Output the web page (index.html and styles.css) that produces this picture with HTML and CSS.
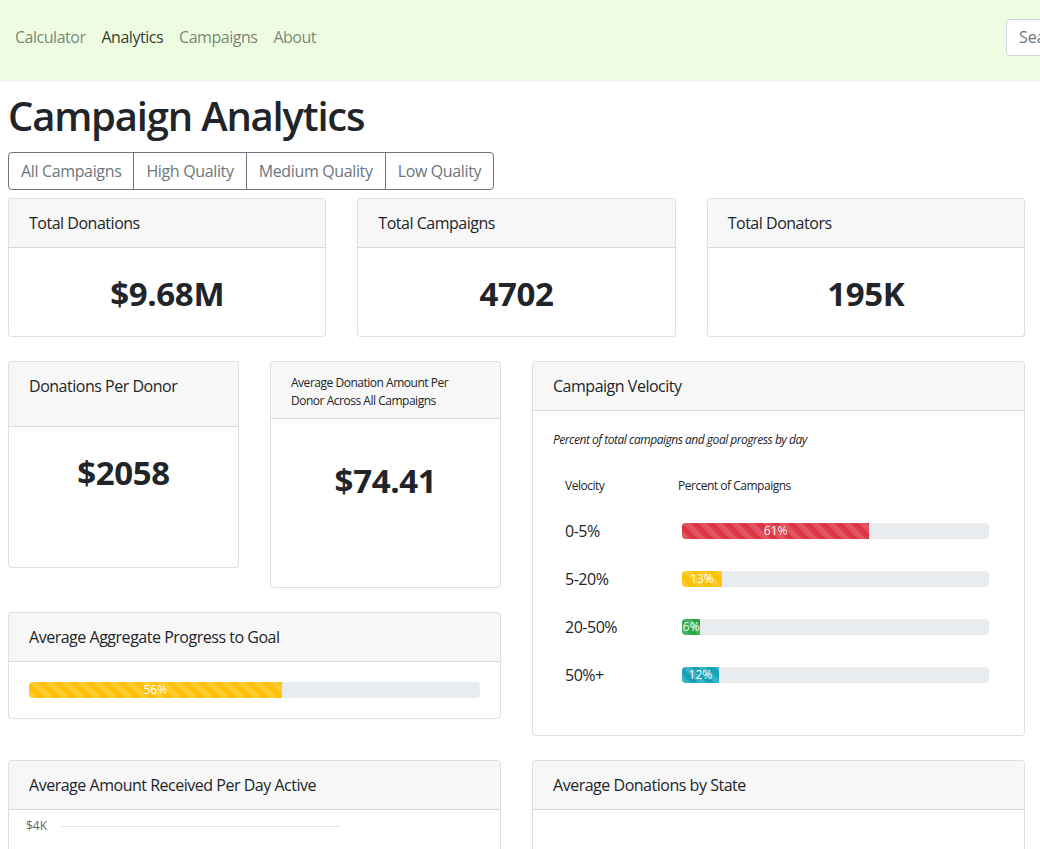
FILE: index.html
```html
<!DOCTYPE html>
<html lang="en">
<head>
<meta charset="utf-8">
<title>Campaign Analytics</title>
<link rel="stylesheet" href="styles.css">
</head>
<body>
<nav class="navbar">
  <ul class="nav-links">
    <li><a class="nav-link" href="#">Calculator</a></li>
    <li><a class="nav-link active" href="#">Analytics</a></li>
    <li><a class="nav-link" href="#">Campaigns</a></li>
    <li><a class="nav-link" href="#">About</a></li>
  </ul>
  <form class="search-form">
    <input class="search-input" type="search" placeholder="Search">
  </form>
</nav>

<main class="page">
  <h1 class="page-title">Campaign Analytics</h1>
  <div class="btn-group">
    <button class="btn">All Campaigns</button>
    <button class="btn">High Quality</button>
    <button class="btn">Medium Quality</button>
    <button class="btn">Low Quality</button>
  </div>

  <section class="row-three">
    <div class="card">
      <div class="card-header">Total Donations</div>
      <div class="card-body stat-body"><div class="stat">$9.68M</div></div>
    </div>
    <div class="card">
      <div class="card-header">Total Campaigns</div>
      <div class="card-body stat-body"><div class="stat">4702</div></div>
    </div>
    <div class="card">
      <div class="card-header">Total Donators</div>
      <div class="card-body stat-body"><div class="stat">195K</div></div>
    </div>
  </section>

  <section class="row-two">
    <div class="col">
      <div class="pair">
        <div class="card">
          <div class="card-header header-tall">Donations Per Donor</div>
          <div class="card-body body-donor"><div class="stat">$2058</div></div>
        </div>
        <div class="card">
          <div class="card-header header-small">Average Donation Amount Per Donor Across All Campaigns</div>
          <div class="card-body body-avg"><div class="stat">$74.41</div></div>
        </div>
      </div>
      <div class="card">
        <div class="card-header">Average Aggregate Progress to Goal</div>
        <div class="card-body">
          <div class="progress"><div class="progress-bar bar-warning" style="width:56%">56%</div></div>
        </div>
      </div>
    </div>

    <div class="col">
      <div class="card">
        <div class="card-header">Campaign Velocity</div>
        <div class="card-body">
          <p class="subtitle">Percent of total campaigns and goal progress by day</p>
          <table class="velocity">
            <thead>
              <tr><th class="col-label">Velocity</th><th>Percent of Campaigns</th></tr>
            </thead>
            <tbody>
              <tr><td class="col-label">0-5%</td><td class="bar-cell"><div class="progress"><div class="progress-bar bar-danger" style="width:61%">61%</div></div></td></tr>
              <tr><td class="col-label">5-20%</td><td class="bar-cell"><div class="progress"><div class="progress-bar bar-warning" style="width:13%">13%</div></div></td></tr>
              <tr><td class="col-label">20-50%</td><td class="bar-cell"><div class="progress"><div class="progress-bar bar-success" style="width:6%">6%</div></div></td></tr>
              <tr><td class="col-label">50%+</td><td class="bar-cell"><div class="progress"><div class="progress-bar bar-info" style="width:12%">12%</div></div></td></tr>
            </tbody>
          </table>
        </div>
      </div>
    </div>
  </section>

  <section class="row-two">
    <div class="card">
      <div class="card-header">Average Amount Received Per Day Active</div>
      <div class="card-body chart-body">
        <div class="axis-row"><span class="axis-label">$4K</span><span class="grid-line"></span></div>
      </div>
    </div>
    <div class="card">
      <div class="card-header">Average Donations by State</div>
      <div class="card-body chart-body"></div>
    </div>
  </section>
</main>
</body>
</html>
```

FILE: styles.css
```css
* { box-sizing: border-box; }

html, body {
  margin: 0;
  overflow-x: hidden;
}

body {
  font-family: "Open Sans", "Noto Sans", "Liberation Sans", sans-serif;
  font-size: 16px;
  line-height: 1.5;
  color: #212529;
  background: #fff;
  letter-spacing: -0.03em;
}

/* navbar */
.navbar {
  height: 80px;
  background: #edfde2;
  box-shadow: 0 1px 2px rgba(0, 0, 0, 0.08);
  display: flex;
  align-items: center;
  justify-content: space-between;
  padding: 0 0 6px 7px;
  overflow: hidden;
  position: relative;
}

.nav-links {
  list-style: none;
  margin: 0;
  padding: 0;
  display: flex;
}

.nav-link {
  display: block;
  padding: 8px;
  color: rgba(0, 0, 0, 0.5);
  text-decoration: none;
}

.nav-link.active { color: rgba(0, 0, 0, 0.8); }

.search-form {
  margin-right: -60px;
  display: flex;
}

.search-input {
  width: 94px;
  height: 37px;
  border: 1px solid #ced4da;
  border-radius: 4px;
  padding: 6px 12px;
  font: inherit;
  color: #495057;
  background: #fff;
}
.search-input::placeholder { color: #6c757d; }

/* page */
.page {
  width: 1025px;
  padding: 0 0 0 8px;
}

.page-title {
  font-size: 40px;
  font-weight: 600;
  line-height: 48px;
  margin: 12px 0 12px;
  letter-spacing: -0.03em;
}

.btn-group {
  display: inline-flex;
  margin-bottom: 8px;
}

.btn {
  font: inherit;
  letter-spacing: -0.022em;
  color: #6c757d;
  background: transparent;
  border: 1px solid #6c757d;
  padding: 6px 12px;
  line-height: 24px;
  margin-left: -1px;
  border-radius: 0;
}
.btn:first-child { margin-left: 0; border-radius: 4px 0 0 4px; }
.btn:last-child { border-radius: 0 4px 4px 0; }

.row-three {
  display: grid;
  grid-template-columns: repeat(3, 1fr);
  column-gap: 31px;
  align-items: start;
}

.row-two {
  display: grid;
  grid-template-columns: 1fr 1fr;
  column-gap: 31px;
  align-items: start;
}

.pair {
  display: grid;
  grid-template-columns: 1fr 1fr;
  column-gap: 31px;
  align-items: start;
}

/* cards */
.card {
  border: 1px solid rgba(0, 0, 0, 0.125);
  border-radius: 4px;
  background: #fff;
  margin-bottom: 24px;
  overflow: hidden;
}

.card-header {
  background: #f7f7f7;
  border-bottom: 1px solid rgba(0, 0, 0, 0.125);
  padding: 12px 20px;
  line-height: 24px;
}

.header-tall { padding-bottom: 28px; }

.header-small {
  font-size: 12px;
  line-height: 18px;
  padding-bottom: 8px;
}

.card-body { padding: 20px; }

.stat-body {
  height: 88px;
  display: flex;
  align-items: center;
  justify-content: center;
  padding: 4px 20px 0;
}

.stat {
  font-size: 33px;
  font-weight: 700;
  line-height: 40px;
  text-align: center;
  letter-spacing: -0.01em;
}

.body-donor { height: 140px; padding-top: 26px; }
.body-avg { height: 168px; padding-top: 42px; }

/* progress */
.progress {
  height: 16px;
  background: #e9ecef;
  border-radius: 4px;
  overflow: hidden;
  display: flex;
}

.progress-bar {
  height: 100%;
  color: #fff;
  font-size: 12px;
  line-height: 16px;
  text-align: center;
  white-space: nowrap;
  letter-spacing: 0;
  background-image: linear-gradient(45deg,
    rgba(255, 255, 255, 0.15) 25%, transparent 25%,
    transparent 50%, rgba(255, 255, 255, 0.15) 50%,
    rgba(255, 255, 255, 0.15) 75%, transparent 75%, transparent);
  background-size: 16px 16px;
}

.bar-danger { background-color: #dc3545; }
.bar-warning { background-color: #ffc107; }
.bar-success { background-color: #28a745; }
.bar-info { background-color: #17a2b8; }

/* velocity table */
.subtitle {
  margin: 0 0 16px;
  font-size: 12px;
  line-height: 18px;
  font-style: italic;
}

.velocity {
  width: 100%;
  border-collapse: collapse;
  margin-bottom: 16px;
}

.velocity th {
  font-size: 12px;
  font-weight: 400;
  line-height: 18px;
  text-align: left;
  padding: 12px;
}

.velocity td {
  padding: 12px;
  line-height: 24px;
}

.velocity .col-label { width: 113px; }

.velocity .bar-cell { padding: 12px 15px 12px 16px; }

/* chart */
.chart-body {
  height: 60px;
  padding: 8px 0 0 17px;
}

.axis-row {
  display: flex;
  align-items: center;
  gap: 14px;
}

.axis-label {
  font-size: 12px;
  line-height: 16px;
  color: #666;
  letter-spacing: 0;
}

.grid-line {
  width: 280px;
  height: 1px;
  background: #e6e6e6;
}
```
